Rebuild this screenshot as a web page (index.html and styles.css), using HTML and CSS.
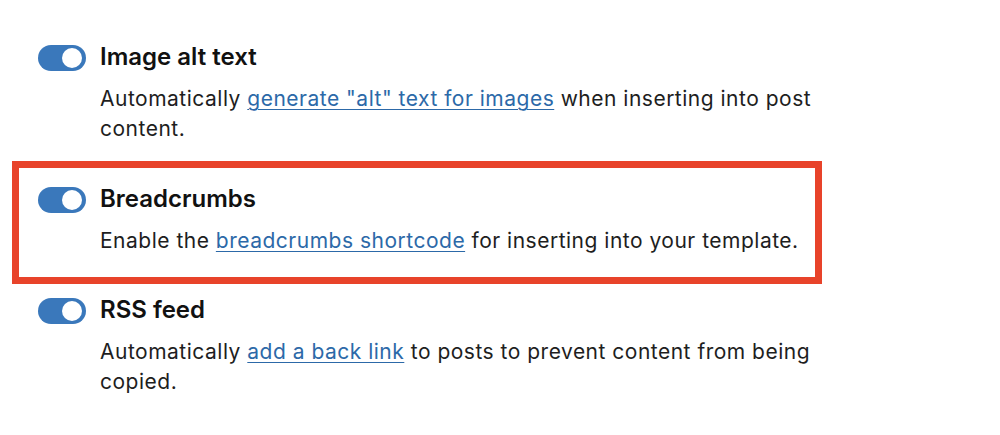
FILE: index.html
```html
<!DOCTYPE html>
<html lang="en">
<head>
<meta charset="utf-8">
<link rel="stylesheet" href="styles.css">
</head>
<body>
<div class="list">
  <div class="setting">
    <span class="toggle"><span class="knob"></span></span>
    <div class="text">
      <div class="title">Image alt text</div>
      <p class="desc">Automatically <a href="#">generate "alt" text for images</a> when inserting into post content.</p>
    </div>
  </div>
  <div class="setting setting--highlight">
    <span class="toggle"><span class="knob"></span></span>
    <div class="text">
      <div class="title">Breadcrumbs</div>
      <p class="desc">Enable the <a href="#">breadcrumbs shortcode</a> for inserting into your template.</p>
    </div>
  </div>
  <div class="setting">
    <span class="toggle"><span class="knob"></span></span>
    <div class="text">
      <div class="title">RSS feed</div>
      <p class="desc">Automatically <a href="#">add a back link</a> to posts to prevent content from being copied.</p>
    </div>
  </div>
</div>
</body>
</html>
```
FILE: styles.css
```css
html, body {
  margin: 0;
  background: #ffffff;
}
body {
  font-family: Inter, "Noto Sans", "Liberation Sans", sans-serif;
  color: #1e1e1e;
}
.list {
  display: flex;
  flex-direction: column;
  padding: 43px 0 0 38px;
}
.setting {
  display: flex;
  align-items: flex-start;
  gap: 14px;
}
.setting--highlight {
  box-sizing: border-box;
  width: 810px;
  margin: 17px 0 12px -26px;
  padding: 17px 0 21px 19px;
  border: 7px solid #e8432a;
}
.toggle {
  flex: none;
  position: relative;
  width: 48px;
  height: 26px;
  margin-top: 2px;
  border-radius: 13px;
  background: #3a78bb;
}
.knob {
  position: absolute;
  top: 3px;
  right: 4px;
  width: 20px;
  height: 20px;
  border-radius: 50%;
  background: #ffffff;
}
.text {
  width: 720px;
}
.title {
  font-size: 24px;
  line-height: 28px;
  font-weight: 600;
  color: #111111;
}
.desc {
  margin: 13px 0 0;
  font-size: 21px;
  letter-spacing: 0.5px;
  line-height: 30px;
  color: #1e1e1e;
}
.desc a {
  color: #2c69a8;
  text-decoration: underline;
  text-underline-offset: 3px;
  text-decoration-thickness: 1px;
}
```
